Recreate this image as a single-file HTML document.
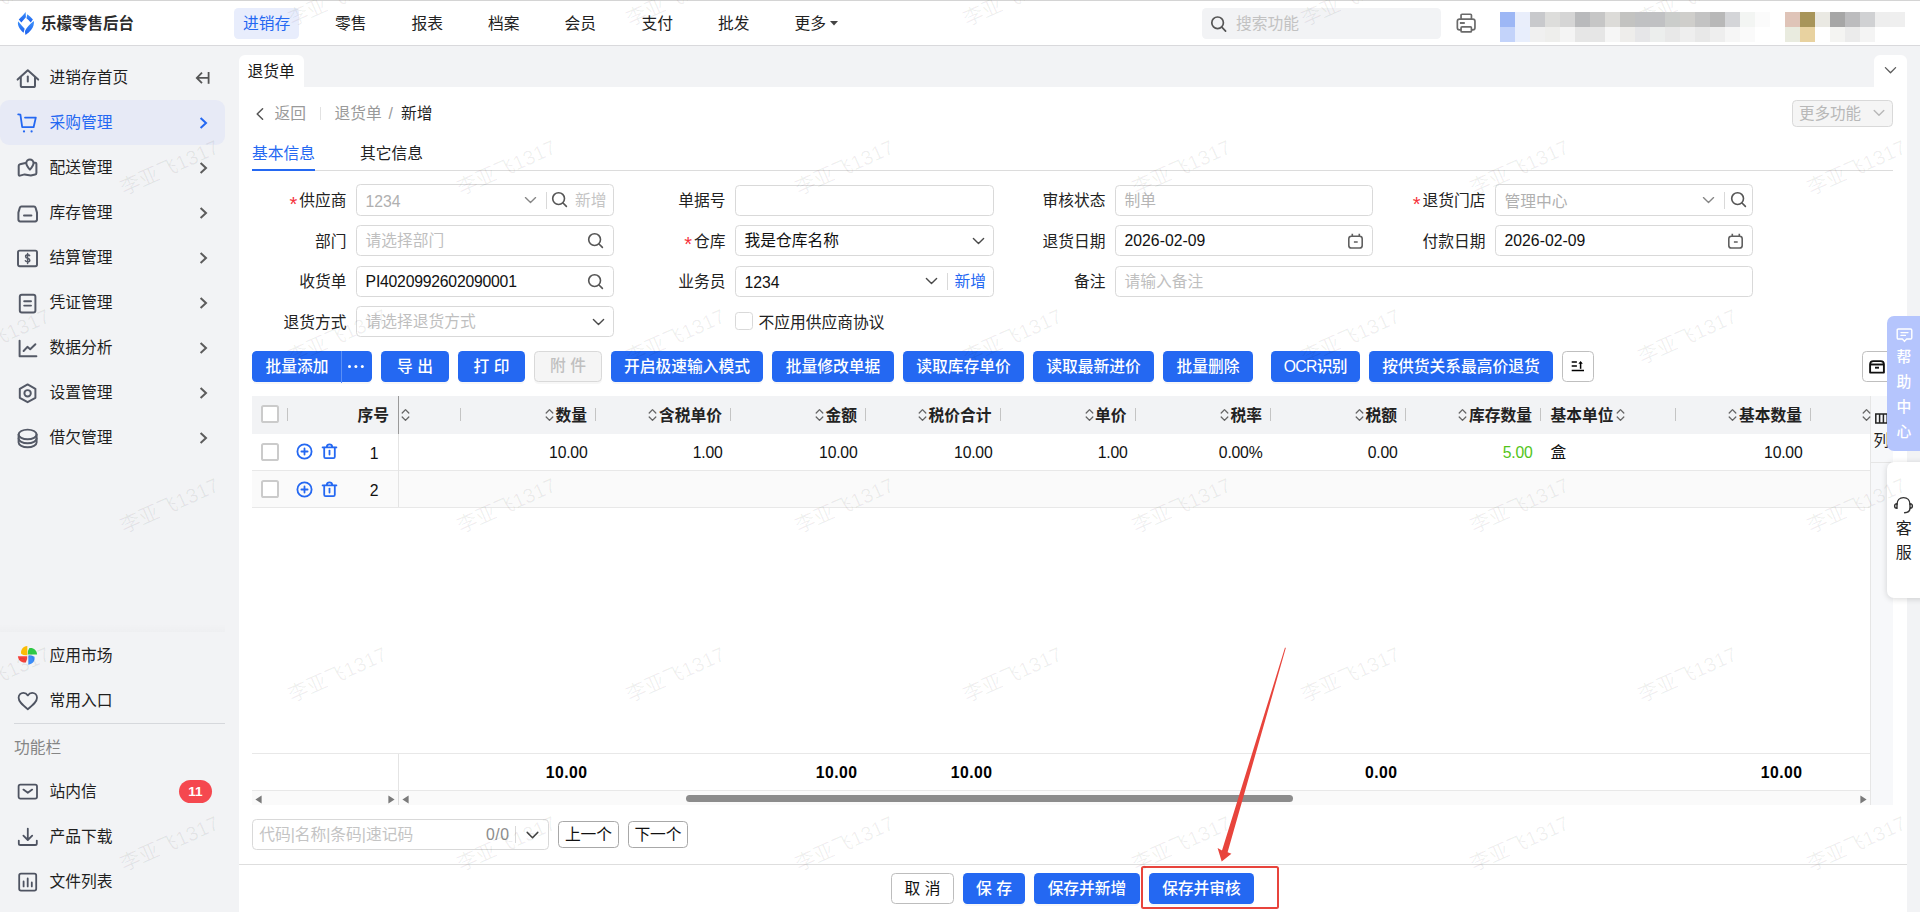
<!DOCTYPE html>
<html lang="zh-CN">
<head>
<meta charset="utf-8">
<title>乐檬零售后台 - 退货单</title>
<style>
*{box-sizing:border-box;margin:0;padding:0}
html,body{width:1920px;height:912px;overflow:hidden;background:#fff}
body{font-family:"Liberation Sans","Noto Sans CJK SC",sans-serif;font-size:15.75px;color:#222;position:relative}
.abs{position:absolute}
.t{position:absolute;white-space:nowrap;line-height:22px;height:22px}
.b{font-weight:bold}
svg{position:absolute;overflow:visible}
/* header */
#hdr{position:absolute;left:0;top:0;width:1920px;height:46px;background:#fff;border-bottom:1px solid #d9d9dc}
.nav{position:absolute;top:12.5px;height:22px;line-height:22px;font-size:15.75px;color:#222;white-space:nowrap}
/* sidebar */
#side{position:absolute;left:0;top:46px;width:238px;height:866px;background:#f2f3f5}
.si{position:absolute;left:49.4px;height:22px;line-height:22px;font-size:15.75px;color:#1f1f1f;white-space:nowrap}
.chev{position:absolute;left:199px;width:9px;height:13px}
/* main */
#main{position:absolute;left:238px;top:46px;width:1682px;height:866px;background:#f2f3f5}
#panel{position:absolute;left:239px;top:87px;width:1668px;height:825px;background:#fff}
.lbl{position:absolute;height:22px;line-height:22px;text-align:right;white-space:nowrap;color:#222}
.req{color:#f5323c;margin-right:2px;font-size:20px;line-height:10px;position:relative;top:4.5px;font-family:"Liberation Sans",sans-serif}
.inp{position:absolute;height:31px;border:1px solid #d9d9d9;border-radius:4.4px;background:#fff}
.inp .v{position:absolute;left:8.6px;top:4.3px;height:22px;line-height:22px;white-space:nowrap}
.ph{color:#bfbfbf}
.btn{font-weight:500;position:absolute;top:351px;height:31px;border-radius:4.4px;background:#2468f2;color:#fff;text-align:center;line-height:32px;white-space:nowrap;box-shadow:0 2px 0 rgba(0,0,0,0.03)}
.th{position:absolute;top:405px;height:22px;line-height:22px;font-weight:bold;color:#222;white-space:nowrap;text-align:right}
.td{letter-spacing:-0.2px;position:absolute;height:22px;line-height:22px;white-space:nowrap;text-align:right;color:#111}
.sep{position:absolute;top:408px;width:1.4px;height:13px;background:#c4c4c4}
.wm{position:absolute;font-size:20.25px;line-height:24px;height:24px;color:rgba(0,0,0,0.062);transform:rotate(-24deg);transform-origin:0 100%;white-space:nowrap;pointer-events:none;font-family:"Liberation Sans","Noto Sans CJK SC",sans-serif}
#mosaic{z-index:5}
#mosaic i{display:inline-block;width:15px;height:15px;vertical-align:top}
</style>
</head>
<body>
<div id="hdr">
  <!-- logo -->
  <div class="abs" style="left:0;top:0;width:1920px;height:1px;background:#d4d4d4"></div>
  <svg style="left:10px;top:4px" width="40" height="38" viewBox="0 0 960 912">
    <defs><linearGradient id="lg" x1="0" y1="0" x2="0" y2="1"><stop offset="0" stop-color="#3e93fb"/><stop offset="1" stop-color="#1d5fee"/></linearGradient></defs>
    <path d="M375 190 C330 250 260 320 210 370 L272 442 C310 400 350 360 382 318 Z" fill="url(#lg)"/>
    <path d="M415 245 C460 280 520 330 550 370 L498 442 C470 410 430 370 395 340 Z" fill="url(#lg)"/>
    <path d="M195 420 C180 470 190 520 240 600 C270 640 300 670 325 692 L352 596 C300 540 250 480 200 420 Z" fill="url(#lg)"/>
    <path d="M572 408 C585 470 560 560 510 620 C470 670 420 715 375 742 C360 700 358 660 362 640 C400 560 480 480 572 408 Z" fill="url(#lg)"/>
  </svg>
  <div class="t b" style="left:41px;top:13px;font-size:15.4px;color:#2b2b2b;letter-spacing:0.1px">乐檬零售后台</div>
  <!-- nav -->
  <div class="abs" style="left:234px;top:8px;width:65px;height:31px;border-radius:4.4px;background:#e8edfc"></div>
  <div class="nav" style="left:243px;color:#2468f2">进销存</div>
  <div class="nav" style="left:335px">零售</div>
  <div class="nav" style="left:411.5px">报表</div>
  <div class="nav" style="left:488px">档案</div>
  <div class="nav" style="left:564.5px">会员</div>
  <div class="nav" style="left:641.5px">支付</div>
  <div class="nav" style="left:718px">批发</div>
  <div class="nav" style="left:794.5px">更多</div>
  <svg style="left:829.5px;top:21px" width="8" height="5" viewBox="0 0 8 5"><path d="M0 0 L8 0 L4 4.6 Z" fill="#444"/></svg>
  <!-- search -->
  <div class="abs" style="left:1202px;top:8px;width:239px;height:31px;border-radius:4.4px;background:#f2f3f5"></div>
  <svg style="left:1210px;top:15px" width="18" height="18" viewBox="0 0 18 18" fill="none" stroke="#555" stroke-width="1.7"><circle cx="7.6" cy="7.8" r="5.8"/><path d="M11.8 12.2 L15.6 16.2" stroke-linecap="round"/></svg>
  <div class="t" style="left:1236px;top:12.5px;color:#c2c2c2">搜索功能</div>
  <!-- printer -->
  <svg style="left:1456px;top:13px" width="20" height="20" viewBox="0 0 20 20" fill="none" stroke="#6a6a6a" stroke-width="1.7" stroke-linejoin="round"><rect x="1.35" y="6.05" width="17.6" height="10.8" rx="2.2"/><rect x="5.05" y="1.25" width="10.4" height="4.8" rx="1" fill="#fff"/><rect x="5.05" y="13.95" width="10.4" height="4.95" rx="1" fill="#fff"/><path d="M3.9 10 H8.8" stroke-width="1.9"/></svg>
  <!-- mosaic -->
  <div class="abs" id="mosaic" style="left:1500px;top:12px;width:405px;height:30px;font-size:0;line-height:0">
<i style="background:#9db7f5"></i><i style="background:#e9eefb"></i><i style="background:#c8c9cc"></i><i style="background:#dddddb"></i><i style="background:#d5d5d5"></i><i style="background:#b9babc"></i><i style="background:#c6c6c6"></i><i style="background:#dcdbd8"></i><i style="background:#c3c3c1"></i><i style="background:#c0c1c3"></i><i style="background:#c0c1c3"></i><i style="background:#cbcdcb"></i><i style="background:#cfcecb"></i><i style="background:#c3c3c3"></i><i style="background:#b8b8b8"></i><i style="background:#d4d5d8"></i><i style="background:#f3f5f3"></i><i style="background:#fbfbfb"></i><i style="background:#fff"></i><i style="background:#dfc4b8"></i><i style="background:#a8955a"></i><i style="background:#eae9e3"></i><i style="background:#a6a6a6"></i><i style="background:#bcbcbe"></i><i style="background:#d0d1d3"></i><i style="background:#eee"></i><i style="background:#efefef"></i><i style="background:#c3d3fa"></i><i style="background:#e8eefc"></i><i style="background:#f0f0f0"></i><i style="background:#eeeeec"></i><i style="background:#f4f4f4"></i><i style="background:#e6e6e6"></i><i style="background:#e6e6e6"></i><i style="background:#f6f6f6"></i><i style="background:#eeedeb"></i><i style="background:#e6e6e8"></i><i style="background:#eceeed"></i><i style="background:#e8e8e8"></i><i style="background:#eee"></i><i style="background:#e8e8e8"></i><i style="background:#eee"></i><i style="background:#f6f6f6"></i><i style="background:#fafafa"></i><i style="background:#fff"></i><i style="background:#fff"></i><i style="background:#e9ebdf"></i><i style="background:#e8d2a0"></i><i style="background:#fff"></i><i style="background:#f4f4f2"></i><i style="background:#ebebeb"></i><i style="background:#f4f4f4"></i><i style="background:#fff"></i><i style="background:#fff"></i>
  </div>
</div>
<div id="side"></div>
<div class="abs" style="left:0px;top:100px;width:225px;height:45px;border-radius:9px;background:#e7eaf6"></div>
<!-- sidebar icons -->

<svg style="left:15.5px;top:65.5px" width="24" height="24" viewBox="0 0 24 24" fill="none" stroke="#545966" stroke-width="2" stroke-linecap="round" stroke-linejoin="round"><path d="M1.6 13.6 L11.8 4.2 L22.2 13.6"/><path d="M4.8 11.2 V19.4 Q4.8 21 6.4 21 H17.4 Q19 21 19 19.4 V11.2"/><path d="M11.8 10.6 V15.6"/></svg>
<svg style="left:16px;top:111px" width="24" height="24" viewBox="0 0 24 24" fill="none" stroke="#2468f2" stroke-width="1.8" stroke-linecap="round" stroke-linejoin="round"><path d="M2.2 3.4 L4.4 3.7 L6.2 16.2 H17.6 L19.8 6.6 H9"/><circle cx="8" cy="20.4" r="1.1" fill="#2468f2" stroke="none"/><circle cx="15.6" cy="20.4" r="1.1" fill="#2468f2" stroke="none"/></svg>
<svg style="left:16px;top:156px" width="24" height="24" viewBox="0 0 24 24" fill="none" stroke="#545966" stroke-width="2" stroke-linecap="round" stroke-linejoin="round"><path d="M9.4 7 L4 8.2 Q2.7 8.5 2.7 9.8 V18.6 Q2.7 19.9 4 19.6 L8.6 18.4 L14.8 19.6 L19.2 18.6 Q20.4 18.3 20.4 17 V7.8 Q20.4 6.7 19.2 6.7 L18.4 6.8"/><path d="M13.9 13.6 C10.8 10 10.3 8.4 10.3 7.2 C10.3 5 12 3.5 13.9 3.5 C15.8 3.5 17.5 5 17.5 7.2 C17.5 8.4 17 10 13.9 13.6 Z"/></svg>
<svg style="left:16px;top:201px" width="24" height="24" viewBox="0 0 24 24" fill="none" stroke="#545966" stroke-width="2" stroke-linecap="round" stroke-linejoin="round"><path d="M5.4 5.6 H18 Q19.2 5.6 19.6 6.8 L21 11.6 V18.6 Q21 20.4 19.2 20.4 H4.2 Q2.4 20.4 2.4 18.6 V11.6 L3.8 6.8 Q4.2 5.6 5.4 5.6 Z"/><path d="M8 14.6 H15.4"/></svg>
<svg style="left:16px;top:246px" width="24" height="24" viewBox="0 0 24 24" fill="none" stroke="#545966" stroke-width="1.95" stroke-linecap="round" stroke-linejoin="round"><rect x="2" y="4.6" width="19" height="15.6" rx="1.6"/><path d="M13.6 9.6 Q13.2 8.8 11.6 8.8 Q9.6 8.8 9.6 10.4 Q9.6 11.8 11.6 12.2 Q13.8 12.6 13.8 14.2 Q13.8 15.8 11.6 15.8 Q9.8 15.8 9.4 14.8 M11.6 7.4 V17.4" stroke-width="1.5"/></svg>
<svg style="left:16px;top:291px" width="24" height="24" viewBox="0 0 24 24" fill="none" stroke="#545966" stroke-width="1.95" stroke-linecap="round" stroke-linejoin="round"><rect x="3.8" y="3.8" width="15.6" height="17.6" rx="2"/><path d="M8.2 10.2 H15 M8.2 14.6 H15"/></svg>
<svg style="left:16px;top:336px" width="24" height="24" viewBox="0 0 24 24" fill="none" stroke="#545966" stroke-width="1.95" stroke-linecap="round" stroke-linejoin="round"><path d="M3.6 4.6 V20.2 H20.4"/><path d="M7.6 15 L11.4 10.8 L14.2 13.2 L19.4 8.2"/></svg>
<svg style="left:16px;top:381px" width="24" height="24" viewBox="0 0 24 24" fill="none" stroke="#545966" stroke-width="1.95" stroke-linecap="round" stroke-linejoin="round"><path d="M11.6 3.4 L19.4 7.8 V16.8 L11.6 21.2 L3.8 16.8 V7.8 Z"/><circle cx="11.6" cy="12.3" r="3.2"/></svg>
<svg style="left:16px;top:426px" width="24" height="24" viewBox="0 0 24 24" fill="none" stroke="#545966" stroke-width="1.95" stroke-linecap="round" stroke-linejoin="round"><ellipse cx="11.6" cy="8.4" rx="9" ry="4.8"/><path d="M2.6 8.4 V12.4 C2.6 15 6.6 17.2 11.6 17.2 C16.6 17.2 20.6 15 20.6 12.4 V8.4"/><path d="M2.6 12.4 V16.4 C2.6 19 6.6 21.2 11.6 21.2 C16.6 21.2 20.6 19 20.6 16.4 V12.4"/></svg>

<div class="si" style="top:66.5px">进销存首页</div>
<div class="si" style="top:111.5px;color:#2468f2">采购管理</div>
<div class="si" style="top:156.5px">配送管理</div>
<div class="si" style="top:201.5px">库存管理</div>
<div class="si" style="top:246.5px">结算管理</div>
<div class="si" style="top:291.5px">凭证管理</div>
<div class="si" style="top:336.5px">数据分析</div>
<div class="si" style="top:381.5px">设置管理</div>
<div class="si" style="top:426.5px">借欠管理</div>
<!-- collapse icon -->
<svg style="left:195px;top:70px" width="16" height="16" viewBox="0 0 16 16" fill="none" stroke="#555" stroke-width="1.8" stroke-linecap="butt" stroke-linejoin="miter"><path d="M13.6 2 V13.8"/><path d="M13.6 7.9 H2.4 M7 2.6 L1.8 7.9 L7 13.2"/></svg>
<!-- chevrons -->
<svg class="chev" style="top:116px" viewBox="0 0 9 13" fill="none" stroke="#2468f2" stroke-width="2" stroke-linecap="butt" stroke-linejoin="miter"><path d="M1.6 2 L7 7 L1.6 12"/></svg>
<svg class="chev" style="top:161px" viewBox="0 0 9 13" fill="none" stroke="#5c5c5c" stroke-width="2" stroke-linecap="butt" stroke-linejoin="miter"><path d="M1.6 2 L7 7 L1.6 12"/></svg>
<svg class="chev" style="top:206px" viewBox="0 0 9 13" fill="none" stroke="#5c5c5c" stroke-width="2" stroke-linecap="butt" stroke-linejoin="miter"><path d="M1.6 2 L7 7 L1.6 12"/></svg>
<svg class="chev" style="top:251px" viewBox="0 0 9 13" fill="none" stroke="#5c5c5c" stroke-width="2" stroke-linecap="butt" stroke-linejoin="miter"><path d="M1.6 2 L7 7 L1.6 12"/></svg>
<svg class="chev" style="top:296px" viewBox="0 0 9 13" fill="none" stroke="#5c5c5c" stroke-width="2" stroke-linecap="butt" stroke-linejoin="miter"><path d="M1.6 2 L7 7 L1.6 12"/></svg>
<svg class="chev" style="top:341px" viewBox="0 0 9 13" fill="none" stroke="#5c5c5c" stroke-width="2" stroke-linecap="butt" stroke-linejoin="miter"><path d="M1.6 2 L7 7 L1.6 12"/></svg>
<svg class="chev" style="top:386px" viewBox="0 0 9 13" fill="none" stroke="#5c5c5c" stroke-width="2" stroke-linecap="butt" stroke-linejoin="miter"><path d="M1.6 2 L7 7 L1.6 12"/></svg>
<svg class="chev" style="top:431px" viewBox="0 0 9 13" fill="none" stroke="#5c5c5c" stroke-width="2" stroke-linecap="butt" stroke-linejoin="miter"><path d="M1.6 2 L7 7 L1.6 12"/></svg>
<!-- bottom section -->
<div class="abs" style="left:0;top:624px;width:225px;height:8px;background:linear-gradient(to bottom,rgba(0,0,0,0),rgba(0,0,0,0.015))"></div>
<svg style="left:17px;top:645px" width="22" height="22" viewBox="0 0 22 22"><path d="M10.3 0.9 C6 1.3 3.4 4.6 4.1 8.8 Q7 10.8 10.3 10.2 Z" fill="#fbbc05"/><path d="M20.1 9.4 C19.7 5.1 16.4 2.5 12.2 3.2 Q10.2 6.1 10.8 9.4 Z" fill="#2fc845"/><path d="M11.3 19.7 C15.6 19.3 18.2 16 17.5 11.8 Q14.6 9.8 11.3 10.4 Z" fill="#3b8cf8"/><path d="M0.9 11.3 C1.3 15.6 4.6 18.2 8.8 17.5 Q10.8 14.6 10.2 11.3 Z" fill="#f5403a"/></svg>
<div class="si" style="top:644.5px">应用市场</div>
<svg style="left:16px;top:689px" width="24" height="24" viewBox="0 0 24 24" fill="none" stroke="#4e5361" stroke-width="1.8" stroke-linejoin="round"><path d="M11.8 20.2 C6 15.6 2.6 12.6 2.6 8.8 C2.6 5.8 4.8 3.8 7.4 3.8 C9.2 3.8 10.8 4.8 11.8 6.4 C12.8 4.8 14.4 3.8 16.2 3.8 C18.8 3.8 21 5.8 21 8.8 C21 12.6 17.6 15.6 11.8 20.2 Z"/></svg>
<div class="si" style="top:689.5px">常用入口</div>
<div class="abs" style="left:14px;top:722.5px;width:211px;height:1px;background:#d6d8dc"></div>
<div class="t" style="left:14px;top:736.5px;color:#858585">功能栏</div>
<svg style="left:16px;top:780px" width="24" height="24" viewBox="0 0 24 24" fill="none" stroke="#4e5361" stroke-width="1.8" stroke-linecap="round" stroke-linejoin="round"><rect x="2.6" y="4.6" width="18.4" height="14" rx="1.8"/><path d="M7.4 9.6 L11.8 12.8 L16.2 9.6"/></svg>
<div class="si" style="top:780.5px">站内信</div>
<div class="abs b" style="left:179px;top:780px;width:33px;height:23px;border-radius:11.5px;background:#f5484f;color:#fff;font-size:13.6px;line-height:23px;text-align:center">11</div>
<svg style="left:16px;top:825px" width="24" height="24" viewBox="0 0 24 24" fill="none" stroke="#4e5361" stroke-width="1.8" stroke-linecap="round" stroke-linejoin="round"><path d="M11.8 3.6 V14.6 M7.4 10.6 L11.8 15 L16.2 10.6"/><path d="M2.8 15.6 V18.4 Q2.8 20 4.4 20 H19.2 Q20.8 20 20.8 18.4 V15.6"/></svg>
<div class="si" style="top:825.5px">产品下载</div>
<svg style="left:16px;top:870px" width="24" height="24" viewBox="0 0 24 24" fill="none" stroke="#4e5361" stroke-width="1.8" stroke-linecap="round" stroke-linejoin="round"><rect x="3.2" y="3.6" width="17" height="17" rx="1.8"/><path d="M7.6 11.4 V16.4 M11.7 8.4 V16.4 M15.8 12.4 V16.4"/></svg>
<div class="si" style="top:870.5px">文件列表</div>
<div id="main"></div>
<!-- tab bar -->
<div class="abs" style="left:239px;top:55px;width:65px;height:33px;border-radius:6px 6px 0 0;background:#fff"></div>
<div class="t" style="left:247.5px;top:61.3px;color:#1a1a1a">退货单</div>
<div class="abs" style="left:1874px;top:55px;width:33px;height:32px;border-radius:6px 6px 0 0;background:#fff"></div>
<svg style="left:1884px;top:66px" width="13" height="9" viewBox="0 0 13 9" fill="none" stroke="#5a5a5a" stroke-width="1.3" stroke-linecap="round" stroke-linejoin="round"><path d="M1.4 1.6 L6.5 6.8 L11.6 1.6"/></svg>
<div id="panel"></div>
<!-- breadcrumb -->
<svg style="left:255px;top:107px" width="10" height="14" viewBox="0 0 10 14" fill="none" stroke="#555" stroke-width="1.5" stroke-linecap="round" stroke-linejoin="round"><path d="M7.6 1.8 L2.2 7 L7.6 12.2"/></svg>
<div class="t" style="left:274.5px;top:103px;color:#9a9a9a">返回</div>
<div class="abs" style="left:320px;top:107px;width:1px;height:13px;background:#e2e2e2"></div>
<div class="t" style="left:334.5px;top:103px;color:#9a9a9a">退货单</div>
<div class="t" style="left:388.5px;top:103px;color:#9a9a9a">/</div>
<div class="t" style="left:401px;top:103px;color:#222">新增</div>
<!-- more functions -->
<div class="abs" style="left:1792px;top:100px;width:101px;height:27px;border:1px solid #d9d9d9;border-radius:4.4px;background:#f5f5f5"></div>
<div class="t" style="left:1799px;top:103px;color:#b8b8b8;font-size:15.5px">更多功能</div>
<svg style="left:1873px;top:109px" width="12" height="8" viewBox="0 0 12 8" fill="none" stroke="#b8b8b8" stroke-width="1.4" stroke-linecap="round" stroke-linejoin="round"><path d="M1.2 1.4 L6 6.2 L10.8 1.4"/></svg>
<!-- tabs -->
<div class="t" style="left:252px;top:143px;color:#2468f2">基本信息</div>
<div class="t" style="left:360px;top:143px;color:#222">其它信息</div>
<div class="abs" style="left:252px;top:170px;width:1641px;height:1px;background:#dcdcdc"></div>
<div class="abs" style="left:252px;top:169px;width:63px;height:2.2px;background:#2468f2"></div>
<!-- form row 1 -->
<div class="lbl" style="left:256.5px;width:90px;top:190.3px"><span class="req">*</span>供应商</div>
<div class="inp" style="left:356px;top:184px;width:258px;height:32px"><div class="v" style="color:#b0b0b0;top:5.8px">1234</div></div>
<svg style="left:523.5px;top:195.5px" width="13" height="9" viewBox="0 0 13 9" fill="none" stroke="#858585" stroke-width="1.35" stroke-linecap="round" stroke-linejoin="round"><path d="M1.4 1.6 L6.5 6.6 L11.6 1.6"/></svg>
<div class="abs" style="left:546px;top:191.5px;width:1px;height:17px;background:#d9d9d9"></div>
<svg style="left:551px;top:191px" width="17" height="17" viewBox="0 0 17 17" fill="none" stroke="#555" stroke-width="1.6" stroke-linecap="round"><circle cx="7.6" cy="7.6" r="5.9"/><path d="M12 12 L15.4 15.4"/></svg>
<div class="t" style="left:575px;top:190.3px;color:#c4c4c4">新增</div>

<div class="lbl" style="left:635px;width:90.5px;top:190.3px">单据号</div>
<div class="inp" style="left:735px;top:185px;width:259px"></div>

<div class="lbl" style="left:1015px;width:90.5px;top:190.3px">审核状态</div>
<div class="inp" style="left:1115px;top:185px;width:258px"><div class="v" style="color:#b5b5b5">制单</div></div>

<div class="lbl" style="left:1395px;width:90.5px;top:190.3px"><span class="req">*</span>退货门店</div>
<div class="inp" style="left:1495px;top:184px;width:258px;height:32px"><div class="v" style="color:#b0b0b0;top:5.8px">管理中心</div></div>
<svg style="left:1702px;top:195.5px" width="13" height="9" viewBox="0 0 13 9" fill="none" stroke="#858585" stroke-width="1.35" stroke-linecap="round" stroke-linejoin="round"><path d="M1.4 1.6 L6.5 6.6 L11.6 1.6"/></svg>
<div class="abs" style="left:1724px;top:191.5px;width:1px;height:17px;background:#d9d9d9"></div>
<svg style="left:1730px;top:191px" width="17" height="17" viewBox="0 0 17 17" fill="none" stroke="#555" stroke-width="1.6" stroke-linecap="round"><circle cx="7.6" cy="7.6" r="5.9"/><path d="M12 12 L15.4 15.4"/></svg>

<!-- form row 2 -->
<div class="lbl" style="left:256.5px;width:90px;top:230.8px">部门</div>
<div class="inp" style="left:356px;top:225px;width:258px"><div class="v ph">请选择部门</div></div>
<svg style="left:586.5px;top:232px" width="17" height="17" viewBox="0 0 17 17" fill="none" stroke="#555" stroke-width="1.6" stroke-linecap="round"><circle cx="7.6" cy="7.6" r="5.9"/><path d="M12 12 L15.4 15.4"/></svg>

<div class="lbl" style="left:635px;width:90.5px;top:230.8px"><span class="req">*</span>仓库</div>
<div class="inp" style="left:735px;top:225px;width:259px"><div class="v" style="color:#111">我是仓库名称</div></div>
<svg style="left:971.5px;top:236.5px" width="13" height="9" viewBox="0 0 13 9" fill="none" stroke="#4a4a4a" stroke-width="1.4" stroke-linecap="round" stroke-linejoin="round"><path d="M1.4 1.6 L6.5 6.6 L11.6 1.6"/></svg>

<div class="lbl" style="left:1015px;width:90.5px;top:230.8px">退货日期</div>
<div class="inp" style="left:1115px;top:225px;width:258px"><div class="v" style="color:#111">2026-02-09</div></div>
<svg style="left:1347px;top:232.5px" width="17" height="17" viewBox="0 0 17 17" fill="none" stroke="#606060" stroke-width="1.6" stroke-linejoin="round"><rect x="1.8" y="3.2" width="13.4" height="11.8" rx="2.6"/><path d="M5.3 0.8 V3.2 M12.3 0.8 V3.2 M6.9 9 H10.7"/></svg>

<div class="lbl" style="left:1395px;width:90.5px;top:230.8px">付款日期</div>
<div class="inp" style="left:1495px;top:225px;width:258px"><div class="v" style="color:#111">2026-02-09</div></div>
<svg style="left:1726.5px;top:232.5px" width="17" height="17" viewBox="0 0 17 17" fill="none" stroke="#606060" stroke-width="1.6" stroke-linejoin="round"><rect x="1.8" y="3.2" width="13.4" height="11.8" rx="2.6"/><path d="M5.3 0.8 V3.2 M12.3 0.8 V3.2 M6.9 9 H10.7"/></svg>

<!-- form row 3 -->
<div class="lbl" style="left:256.5px;width:90px;top:271.3px">收货单</div>
<div class="inp" style="left:356px;top:265.5px;width:258px"><div class="v" style="color:#111;letter-spacing:-0.22px">PI4020992602090001</div></div>
<svg style="left:586.5px;top:272.5px" width="17" height="17" viewBox="0 0 17 17" fill="none" stroke="#555" stroke-width="1.6" stroke-linecap="round"><circle cx="7.6" cy="7.6" r="5.9"/><path d="M12 12 L15.4 15.4"/></svg>

<div class="lbl" style="left:635px;width:90.5px;top:271.3px">业务员</div>
<div class="inp" style="left:735px;top:265.5px;width:259px"><div class="v" style="color:#111;top:5.3px">1234</div></div>
<svg style="left:924.5px;top:277px" width="13" height="9" viewBox="0 0 13 9" fill="none" stroke="#4a4a4a" stroke-width="1.4" stroke-linecap="round" stroke-linejoin="round"><path d="M1.4 1.6 L6.5 6.6 L11.6 1.6"/></svg>
<div class="abs" style="left:947px;top:272.5px;width:1px;height:17px;background:#d9d9d9"></div>
<div class="t" style="left:954.5px;top:271.3px;color:#2468f2">新增</div>

<div class="lbl" style="left:1015px;width:90.5px;top:271.3px">备注</div>
<div class="inp" style="left:1115px;top:265.5px;width:638px"><div class="v ph">请输入备注</div></div>

<!-- form row 4 -->
<div class="lbl" style="left:256.5px;width:90px;top:311.8px">退货方式</div>
<div class="inp" style="left:356px;top:306px;width:258px"><div class="v ph">请选择退货方式</div></div>
<svg style="left:591.5px;top:317.5px" width="13" height="9" viewBox="0 0 13 9" fill="none" stroke="#4a4a4a" stroke-width="1.4" stroke-linecap="round" stroke-linejoin="round"><path d="M1.4 1.6 L6.5 6.6 L11.6 1.6"/></svg>
<div class="abs" style="left:735px;top:312px;width:18px;height:18px;border:1px solid #d9d9d9;border-radius:3.4px;background:#fff"></div>
<div class="t" style="left:758.5px;top:311.5px;color:#222">不应用供应商协议</div>

<!-- toolbar -->
<div class="btn" style="left:252px;width:120px"></div>
<div class="abs" style="left:341px;top:351px;width:1px;height:32px;background:#5a8ff6"></div>
<div class="t" style="left:265.6px;top:356.2px;color:#fff;font-weight:500">批量添加</div>
<div class="abs" style="left:347.5px;top:365px;width:3px;height:3px;border-radius:2px;background:#fff;box-shadow:6.4px 0 0 #fff,12.8px 0 0 #fff"></div>
<div class="btn" style="left:381px;width:68px">导 出</div>
<div class="btn" style="left:458px;width:67px">打 印</div>
<div class="btn" style="left:534px;width:68px;background:#f5f5f5;border:1px solid #d9d9d9;color:#c0c0c0;line-height:28px">附 件</div>
<div class="btn" style="left:611px;width:152px">开启极速输入模式</div>
<div class="btn" style="left:772px;width:122px">批量修改单据</div>
<div class="btn" style="left:903px;width:121px">读取库存单价</div>
<div class="btn" style="left:1033px;width:121px">读取最新进价</div>
<div class="btn" style="left:1163px;width:90px">批量删除</div>
<div class="btn" style="left:1271px;width:88.5px;letter-spacing:-0.7px">OCR识别</div>
<div class="btn" style="left:1369px;width:184px">按供货关系最高价退货</div>
<div class="abs" style="left:1562px;top:351px;width:32px;height:31px;border:1px solid #bfbfbf;border-radius:4.4px;background:#fff"></div>
<svg style="left:1570px;top:359px" width="16" height="16" viewBox="0 0 16 16" fill="none" stroke="#000" stroke-width="1.5"><path d="M1.7 2.9 H6.9 M1.7 7.1 H6.9 M1.7 11.5 H14"/><path d="M10.6 9.8 V3.2" stroke-width="1.5"/><path d="M8.4 4.8 L10.6 2 L12.8 4.8 Z" fill="#000" stroke="none"/></svg>
<div class="abs" style="left:1862px;top:351px;width:40px;height:31px;border:1px solid #bfbfbf;border-radius:4.4px;background:#fff"></div>
<svg style="left:1868px;top:358px" width="18" height="18" viewBox="0 0 18 18" fill="none" stroke="#111" stroke-width="1.9" stroke-linejoin="round"><path d="M2.1 14.6 V6.4 Q2.1 3.1 5.4 3.1 H12.6 Q15.9 3.1 15.9 6.4 V14.6 Z"/><path d="M2.1 6.5 H15.9"/><path d="M7 9.7 H11" stroke-linecap="butt"/></svg>
<!-- table -->
<div class="abs" style="left:252px;top:396px;width:1618px;height:38px;background:#f2f3f5"></div>
<div class="abs" style="left:252px;top:470px;width:1618px;height:1px;background:#e8e8e8"></div>
<div class="abs" style="left:252px;top:471px;width:1618px;height:36px;background:#fafafa"></div>
<div class="abs" style="left:252px;top:507px;width:1618px;height:1px;background:#e8e8e8"></div>
<div class="abs" style="left:398px;top:396px;width:1px;height:38px;background:#9a9a9a"></div>
<div class="abs" style="left:398px;top:434px;width:1px;height:73px;background:#e4e4e4"></div>
<div class="abs" style="left:398px;top:753px;width:1px;height:38px;background:#e4e4e4"></div>
<div class="abs" style="left:1870px;top:396px;width:23px;height:409px;background:#f7f8fa;border-left:1px solid #e6e6e6"></div>
<div class="abs" style="left:1870px;top:462px;width:23px;height:1px;background:#e6e6e6"></div>
<div class="abs" style="left:252px;top:753px;width:1618px;height:1px;background:#e8e8e8"></div>
<div class="abs" style="left:252px;top:790px;width:1618px;height:1px;background:#e8e8e8"></div>
<div class="abs" style="left:252px;top:791px;width:1618px;height:14px;background:#fafafa"></div>
<div class="abs" style="left:398px;top:791px;width:1px;height:14px;background:#dcdcdc"></div>
<div class="abs" style="left:261px;top:405px;width:18px;height:18px;border:2px solid #cbcbcb;border-radius:2.6px;background:#fff"></div>
<div class="abs" style="left:261px;top:443px;width:18px;height:18px;border:2px solid #cbcbcb;border-radius:2.6px;background:#fff"></div>
<div class="abs" style="left:261px;top:479.5px;width:18px;height:18px;border:2px solid #cbcbcb;border-radius:2.6px;background:#fff"></div>
<div class="sep" style="left:287px"></div>
<div class="sep" style="left:460px"></div>
<div class="sep" style="left:595px"></div>
<div class="sep" style="left:730px"></div>
<div class="sep" style="left:865px"></div>
<div class="sep" style="left:1000px"></div>
<div class="sep" style="left:1135px"></div>
<div class="sep" style="left:1270px"></div>
<div class="sep" style="left:1405px"></div>
<div class="sep" style="left:1540px"></div>
<div class="sep" style="left:1675px"></div>
<div class="sep" style="left:1810px"></div>
<div class="th" style="left:269px;width:120px">序号</div>
<svg style="left:400.8px;top:407.5px" width="9" height="14" viewBox="0 0 9 14" fill="none" stroke="#666" stroke-width="1.3" stroke-linecap="round" stroke-linejoin="round"><path d="M1.2 5 L4.5 1.6 L7.8 5 M1.2 9 L4.5 12.4 L7.8 9"/></svg>
<div class="th" style="left:467px;width:120px">数量</div>
<svg style="left:544.6px;top:407.5px" width="9" height="14" viewBox="0 0 9 14" fill="none" stroke="#666" stroke-width="1.3" stroke-linecap="round" stroke-linejoin="round"><path d="M1.2 5 L4.5 1.6 L7.8 5 M1.2 9 L4.5 12.4 L7.8 9"/></svg>
<div class="th" style="left:602px;width:120px">含税单价</div>
<svg style="left:647.6px;top:407.5px" width="9" height="14" viewBox="0 0 9 14" fill="none" stroke="#666" stroke-width="1.3" stroke-linecap="round" stroke-linejoin="round"><path d="M1.2 5 L4.5 1.6 L7.8 5 M1.2 9 L4.5 12.4 L7.8 9"/></svg>
<div class="th" style="left:737px;width:120px">金额</div>
<svg style="left:814.6px;top:407.5px" width="9" height="14" viewBox="0 0 9 14" fill="none" stroke="#666" stroke-width="1.3" stroke-linecap="round" stroke-linejoin="round"><path d="M1.2 5 L4.5 1.6 L7.8 5 M1.2 9 L4.5 12.4 L7.8 9"/></svg>
<div class="th" style="left:871.5px;width:120px">税价合计</div>
<svg style="left:917.8px;top:407.5px" width="9" height="14" viewBox="0 0 9 14" fill="none" stroke="#666" stroke-width="1.3" stroke-linecap="round" stroke-linejoin="round"><path d="M1.2 5 L4.5 1.6 L7.8 5 M1.2 9 L4.5 12.4 L7.8 9"/></svg>
<div class="th" style="left:1006.5px;width:120px">单价</div>
<svg style="left:1084.6px;top:407.5px" width="9" height="14" viewBox="0 0 9 14" fill="none" stroke="#666" stroke-width="1.3" stroke-linecap="round" stroke-linejoin="round"><path d="M1.2 5 L4.5 1.6 L7.8 5 M1.2 9 L4.5 12.4 L7.8 9"/></svg>
<div class="th" style="left:1142px;width:120px">税率</div>
<svg style="left:1219.6px;top:407.5px" width="9" height="14" viewBox="0 0 9 14" fill="none" stroke="#666" stroke-width="1.3" stroke-linecap="round" stroke-linejoin="round"><path d="M1.2 5 L4.5 1.6 L7.8 5 M1.2 9 L4.5 12.4 L7.8 9"/></svg>
<div class="th" style="left:1277px;width:120px">税额</div>
<svg style="left:1354.6px;top:407.5px" width="9" height="14" viewBox="0 0 9 14" fill="none" stroke="#666" stroke-width="1.3" stroke-linecap="round" stroke-linejoin="round"><path d="M1.2 5 L4.5 1.6 L7.8 5 M1.2 9 L4.5 12.4 L7.8 9"/></svg>
<div class="th" style="left:1412px;width:120px">库存数量</div>
<svg style="left:1457.8px;top:407.5px" width="9" height="14" viewBox="0 0 9 14" fill="none" stroke="#666" stroke-width="1.3" stroke-linecap="round" stroke-linejoin="round"><path d="M1.2 5 L4.5 1.6 L7.8 5 M1.2 9 L4.5 12.4 L7.8 9"/></svg>
<div class="th" style="left:1550.5px;text-align:left">基本单位</div>
<svg style="left:1615.9px;top:407.5px" width="9" height="14" viewBox="0 0 9 14" fill="none" stroke="#666" stroke-width="1.3" stroke-linecap="round" stroke-linejoin="round"><path d="M1.2 5 L4.5 1.6 L7.8 5 M1.2 9 L4.5 12.4 L7.8 9"/></svg>
<div class="th" style="left:1682px;width:120px">基本数量</div>
<svg style="left:1727.8px;top:407.5px" width="9" height="14" viewBox="0 0 9 14" fill="none" stroke="#666" stroke-width="1.3" stroke-linecap="round" stroke-linejoin="round"><path d="M1.2 5 L4.5 1.6 L7.8 5 M1.2 9 L4.5 12.4 L7.8 9"/></svg>
<svg style="left:1862px;top:407.5px" width="9" height="14" viewBox="0 0 9 14" fill="none" stroke="#666" stroke-width="1.3" stroke-linecap="round" stroke-linejoin="round"><path d="M1.2 5 L4.5 1.6 L7.8 5 M1.2 9 L4.5 12.4 L7.8 9"/></svg>
<svg style="left:296px;top:443.4px" width="17" height="17" viewBox="0 0 17 17" fill="none" stroke="#2468f2" stroke-width="1.8" stroke-linecap="round"><circle cx="8.5" cy="8.5" r="7.1"/><path d="M5.4 8.5 H11.6 M8.5 5.4 V11.6"/></svg>
<svg style="left:321px;top:443.4px" width="17" height="17" viewBox="0 0 17 17" fill="none" stroke="#2468f2" stroke-width="1.8" stroke-linecap="round" stroke-linejoin="round"><path d="M1.6 4.4 H15.4 M5.6 4 Q6 1.4 8.5 1.4 Q11 1.4 11.4 4"/><path d="M3.2 4.6 V13.8 Q3.2 15.2 4.6 15.2 H12.4 Q13.8 15.2 13.8 13.8 V4.6"/><path d="M8.5 7.6 V11.6"/></svg>
<svg style="left:296px;top:480.9px" width="17" height="17" viewBox="0 0 17 17" fill="none" stroke="#2468f2" stroke-width="1.8" stroke-linecap="round"><circle cx="8.5" cy="8.5" r="7.1"/><path d="M5.4 8.5 H11.6 M8.5 5.4 V11.6"/></svg>
<svg style="left:321px;top:480.9px" width="17" height="17" viewBox="0 0 17 17" fill="none" stroke="#2468f2" stroke-width="1.8" stroke-linecap="round" stroke-linejoin="round"><path d="M1.6 4.4 H15.4 M5.6 4 Q6 1.4 8.5 1.4 Q11 1.4 11.4 4"/><path d="M3.2 4.6 V13.8 Q3.2 15.2 4.6 15.2 H12.4 Q13.8 15.2 13.8 13.8 V4.6"/><path d="M8.5 7.6 V11.6"/></svg>
<div class="td" style="left:354px;width:40px;top:442.6px;text-align:center">1</div>
<div class="td" style="left:354px;width:40px;top:479.6px;text-align:center">2</div>
<div class="td" style="left:467.5px;width:120px;top:442px;">10.00</div>
<div class="td" style="left:602.5px;width:120px;top:442px;">1.00</div>
<div class="td" style="left:737.5px;width:120px;top:442px;">10.00</div>
<div class="td" style="left:872.5px;width:120px;top:442px;">10.00</div>
<div class="td" style="left:1007.5px;width:120px;top:442px;">1.00</div>
<div class="td" style="left:1142.5px;width:120px;top:442px;">0.00%</div>
<div class="td" style="left:1277.5px;width:120px;top:442px;">0.00</div>
<div class="td" style="left:1412.5px;width:120px;top:442px;color:#52c41a">5.00</div>
<div class="td" style="left:1550.5px;top:442px;text-align:left">盒</div>
<div class="td" style="left:1682.5px;width:120px;top:442px;">10.00</div>
<div class="td" style="left:467.5px;width:120px;top:761.5px;font-weight:bold;color:#000;letter-spacing:0.45px">10.00</div>
<div class="td" style="left:737.5px;width:120px;top:761.5px;font-weight:bold;color:#000;letter-spacing:0.45px">10.00</div>
<div class="td" style="left:872.5px;width:120px;top:761.5px;font-weight:bold;color:#000;letter-spacing:0.45px">10.00</div>
<div class="td" style="left:1277.5px;width:120px;top:761.5px;font-weight:bold;color:#000;letter-spacing:0.45px">0.00</div>
<div class="td" style="left:1682.5px;width:120px;top:761.5px;font-weight:bold;color:#000;letter-spacing:0.45px">10.00</div>
<svg style="left:255px;top:794.5px" width="7" height="9" viewBox="0 0 7 9"><path d="M6.6 0.4 V8.6 L0.4 4.5 Z" fill="#7a7a7a"/></svg>
<svg style="left:388px;top:794.5px" width="7" height="9" viewBox="0 0 7 9"><path d="M0.4 0.4 V8.6 L6.6 4.5 Z" fill="#7a7a7a"/></svg>
<svg style="left:402px;top:794.5px" width="7" height="9" viewBox="0 0 7 9"><path d="M6.6 0.4 V8.6 L0.4 4.5 Z" fill="#7a7a7a"/></svg>
<svg style="left:1860px;top:794.5px" width="7" height="9" viewBox="0 0 7 9"><path d="M0.4 0.4 V8.6 L6.6 4.5 Z" fill="#7a7a7a"/></svg>
<div class="abs" style="left:686px;top:795px;width:607px;height:7px;border-radius:3.5px;background:#8c8c8c"></div>
<svg style="left:1875px;top:413px" width="13" height="11" viewBox="0 0 13 11" fill="none" stroke="#222" stroke-width="1.5"><rect x="0.8" y="1" width="11.4" height="9"/><path d="M4.6 1 V10 M8.4 1 V10"/></svg>
<div class="t" style="left:1873.5px;top:430px;color:#222">列</div>
<div class="inp" style="left:252px;top:819px;width:297px;height:30.5px"><div class="v" style="left:6.2px;top:3.5px;color:#c4c4c4">代码|名称|条码|速记码</div></div>
<div class="t" style="left:486px;top:823.5px;color:#8c8c8c;letter-spacing:0.5px">0/0</div>
<div class="abs" style="left:515px;top:826px;width:1px;height:17px;background:#d9d9d9"></div>
<svg style="left:525.5px;top:830.5px" width="13" height="9" viewBox="0 0 13 9" fill="none" stroke="#444" stroke-width="1.5" stroke-linecap="round" stroke-linejoin="round"><path d="M1.2 1.4 L6.5 6.8 L11.8 1.4"/></svg>
<div class="abs" style="left:558px;top:821px;width:61px;height:27px;border:1px solid #a8a8a8;border-radius:4.4px;background:#fff;text-align:center;line-height:25px;color:#111">上一个</div>
<div class="abs" style="left:628px;top:821px;width:60px;height:27px;border:1px solid #a8a8a8;border-radius:4.4px;background:#fff;text-align:center;line-height:25px;color:#111">下一个</div>
<div class="abs" style="left:239px;top:864px;width:1668px;height:1px;background:#dedede"></div>
<div class="abs" style="left:891px;top:873px;width:63px;height:31px;border:1px solid #bdbdbd;border-radius:4.4px;background:#fff;text-align:center;line-height:29px;color:#111">取 消</div>
<div class="btn" style="left:963px;top:873px;width:62px">保 存</div>
<div class="btn" style="left:1034px;top:873px;width:106px">保存并新增</div>
<div class="btn" style="left:1149px;top:873px;width:105px">保存并审核</div>
<!-- right strip / floating panels -->
<div class="abs" style="left:1887px;top:316px;width:40px;height:135px;border-radius:7px 0 0 7px;background:#b5c5fd"></div>
<svg style="left:1895.5px;top:327.5px" width="17" height="15" viewBox="0 0 17 15" fill="none" stroke="#fff" stroke-width="1.4" stroke-linejoin="round" stroke-linecap="round"><path d="M2.4 1 H14.6 Q15.8 1 15.8 2.2 V9.8 Q15.8 11 14.6 11 H10.6 L8.5 13.4 L6.4 11 H2.4 Q1.2 11 1.2 9.8 V2.2 Q1.2 1 2.4 1 Z"/><path d="M5 4.6 H12 M5 7.4 H9.4"/></svg>
<div class="t" style="left:1896.4px;top:346.3px;color:#fff;font-size:14.8px;font-weight:500">帮</div>
<div class="t" style="left:1896.4px;top:371.3px;color:#fff;font-size:14.8px;font-weight:500">助</div>
<div class="t" style="left:1896.4px;top:396.3px;color:#fff;font-size:14.8px;font-weight:500">中</div>
<div class="t" style="left:1896.4px;top:421.3px;color:#fff;font-size:14.8px;font-weight:500">心</div>
<div class="abs" style="left:1887px;top:462px;width:40px;height:136px;border-radius:7px 0 0 7px;background:#fff;box-shadow:0 1px 6px rgba(0,0,0,0.16)"></div>
<svg style="left:1893px;top:495px" width="21" height="21" viewBox="0 0 21 21" fill="none" stroke="#333" stroke-width="1.4" stroke-linecap="round" stroke-linejoin="round"><path d="M4 9.6 C4 5.4 6.6 2.6 10.5 2.6 C14.4 2.6 17 5.4 17 9.6"/><path d="M4 8.6 Q1.6 8.8 1.6 11 Q1.6 13.2 4 13.4 Z M17 8.6 Q19.4 8.8 19.4 11 Q19.4 13.2 17 13.4 Z"/><path d="M17 13.6 Q16.6 17.4 11.6 17.8"/></svg>
<div class="t" style="left:1895.8px;top:517.5px;color:#222;font-size:16px">客</div>
<div class="t" style="left:1895.8px;top:541.5px;color:#222;font-size:16px">服</div>
<div class="abs" style="left:1140.5px;top:865.5px;width:138px;height:43px;border:2.6px solid #e8443c;border-radius:2.5px"></div>
<svg style="left:0;top:0" width="1920" height="912" viewBox="0 0 1920 912"><path d="M1285 647.6 L1285.8 648 L1227.6 852.2 L1231.4 853.8 L1221.7 861.6 L1217.6 848 L1222 850.4 Z" fill="#e8443c"/></svg>
<div id="wm" class="abs" style="left:0;top:0;width:1920px;height:912px;overflow:hidden;pointer-events:none">
<div class="wm" style="left:-381.0px;top:7.0px">李亚飞1317</div>
<div class="wm" style="left:-43.5px;top:7.0px">李亚飞1317</div>
<div class="wm" style="left:294.0px;top:7.0px">李亚飞1317</div>
<div class="wm" style="left:631.5px;top:7.0px">李亚飞1317</div>
<div class="wm" style="left:969.0px;top:7.0px">李亚飞1317</div>
<div class="wm" style="left:1306.5px;top:7.0px">李亚飞1317</div>
<div class="wm" style="left:1644.0px;top:7.0px">李亚飞1317</div>
<div class="wm" style="left:1981.5px;top:7.0px">李亚飞1317</div>
<div class="wm" style="left:-381.0px;top:345.0px">李亚飞1317</div>
<div class="wm" style="left:-43.5px;top:345.0px">李亚飞1317</div>
<div class="wm" style="left:294.0px;top:345.0px">李亚飞1317</div>
<div class="wm" style="left:631.5px;top:345.0px">李亚飞1317</div>
<div class="wm" style="left:969.0px;top:345.0px">李亚飞1317</div>
<div class="wm" style="left:1306.5px;top:345.0px">李亚飞1317</div>
<div class="wm" style="left:1644.0px;top:345.0px">李亚飞1317</div>
<div class="wm" style="left:1981.5px;top:345.0px">李亚飞1317</div>
<div class="wm" style="left:-381.0px;top:683.0px">李亚飞1317</div>
<div class="wm" style="left:-43.5px;top:683.0px">李亚飞1317</div>
<div class="wm" style="left:294.0px;top:683.0px">李亚飞1317</div>
<div class="wm" style="left:631.5px;top:683.0px">李亚飞1317</div>
<div class="wm" style="left:969.0px;top:683.0px">李亚飞1317</div>
<div class="wm" style="left:1306.5px;top:683.0px">李亚飞1317</div>
<div class="wm" style="left:1644.0px;top:683.0px">李亚飞1317</div>
<div class="wm" style="left:1981.5px;top:683.0px">李亚飞1317</div>
<div class="wm" style="left:-381.0px;top:1021.0px">李亚飞1317</div>
<div class="wm" style="left:-43.5px;top:1021.0px">李亚飞1317</div>
<div class="wm" style="left:294.0px;top:1021.0px">李亚飞1317</div>
<div class="wm" style="left:631.5px;top:1021.0px">李亚飞1317</div>
<div class="wm" style="left:969.0px;top:1021.0px">李亚飞1317</div>
<div class="wm" style="left:1306.5px;top:1021.0px">李亚飞1317</div>
<div class="wm" style="left:1644.0px;top:1021.0px">李亚飞1317</div>
<div class="wm" style="left:1981.5px;top:1021.0px">李亚飞1317</div>
<div class="wm" style="left:-212.0px;top:176.0px">李亚飞1317</div>
<div class="wm" style="left:125.5px;top:176.0px">李亚飞1317</div>
<div class="wm" style="left:463.0px;top:176.0px">李亚飞1317</div>
<div class="wm" style="left:800.5px;top:176.0px">李亚飞1317</div>
<div class="wm" style="left:1138.0px;top:176.0px">李亚飞1317</div>
<div class="wm" style="left:1475.5px;top:176.0px">李亚飞1317</div>
<div class="wm" style="left:1813.0px;top:176.0px">李亚飞1317</div>
<div class="wm" style="left:2150.5px;top:176.0px">李亚飞1317</div>
<div class="wm" style="left:-212.0px;top:514.0px">李亚飞1317</div>
<div class="wm" style="left:125.5px;top:514.0px">李亚飞1317</div>
<div class="wm" style="left:463.0px;top:514.0px">李亚飞1317</div>
<div class="wm" style="left:800.5px;top:514.0px">李亚飞1317</div>
<div class="wm" style="left:1138.0px;top:514.0px">李亚飞1317</div>
<div class="wm" style="left:1475.5px;top:514.0px">李亚飞1317</div>
<div class="wm" style="left:1813.0px;top:514.0px">李亚飞1317</div>
<div class="wm" style="left:2150.5px;top:514.0px">李亚飞1317</div>
<div class="wm" style="left:-212.0px;top:852.0px">李亚飞1317</div>
<div class="wm" style="left:125.5px;top:852.0px">李亚飞1317</div>
<div class="wm" style="left:463.0px;top:852.0px">李亚飞1317</div>
<div class="wm" style="left:800.5px;top:852.0px">李亚飞1317</div>
<div class="wm" style="left:1138.0px;top:852.0px">李亚飞1317</div>
<div class="wm" style="left:1475.5px;top:852.0px">李亚飞1317</div>
<div class="wm" style="left:1813.0px;top:852.0px">李亚飞1317</div>
<div class="wm" style="left:2150.5px;top:852.0px">李亚飞1317</div>
</div>
</body>
</html>
